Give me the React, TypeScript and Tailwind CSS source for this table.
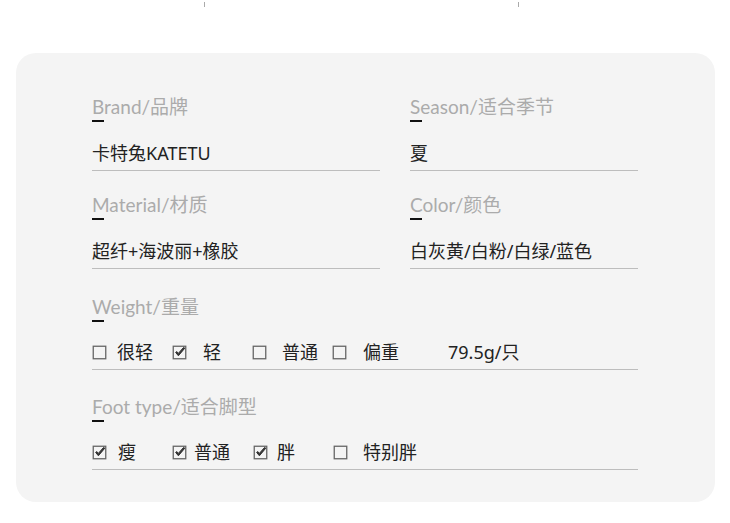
import React from "react";

const cjk = { fontFamily: '"Noto Sans", "Noto Sans CJK SC", sans-serif' };
const lab = { fontFamily: 'Lato, "Noto Sans CJK SC", sans-serif' };

function Box({ checked }: { checked?: boolean }) {
  return (
    <svg width="15" height="15" viewBox="0 0 15 15" className="shrink-0">
      <rect x="1.25" y="1.25" width="12.5" height="12.5" fill="none" stroke="#666" strokeWidth="1.3" />
      {checked && (
        <path d="M3.6 7.4 L6.4 10.8 L12.8 3.2 L11.6 2.4 L6.3 8.4 L4.9 6.6 Z" fill="#333" stroke="#333" strokeWidth="1" strokeLinejoin="round" />
      )}
    </svg>
  );
}

function Label({ text }: { text: string }) {
  return (
    <div>
      <div className="h-[20px] text-[19px] font-normal leading-[20px] text-[#ababab]" style={lab}>
        {text}
      </div>
      <div className="mt-[3px] h-[2px] w-[12px] bg-[#111]" />
    </div>
  );
}

function Field({ label, value, w }: { label: string; value: string; w: string }) {
  return (
    <div className={w}>
      <Label text={label} />
      <div className="mt-[21px] h-[20px] pb-[7px] box-content border-b border-[#bdbdbd] text-[18px] leading-[20px] text-[#222]" style={cjk}>
        {value}
      </div>
    </div>
  );
}

function Opt({ checked, text, w, gap }: { checked?: boolean; text: string; w: string; gap: string }) {
  return (
    <div className={`flex items-center ${w} ${gap}`}>
      <Box checked={checked} />
      <span>{text}</span>
    </div>
  );
}

export default function App() {
  return (
    <div className="w-[730px] h-[523px] bg-white relative overflow-hidden">
      <div className="absolute left-[204px] top-[2px] w-px h-[5px] bg-[#aaa]" />
      <div className="absolute left-[518px] top-[2px] w-px h-[5px] bg-[#aaa]" />
      <div className="pt-[53px] pl-[16px]">
        <div className="w-[699px] h-[449px] rounded-[20px] bg-[#f4f4f4] pl-[76px] pt-[44px]">
          <div className="flex">
            <Field label="Brand/品牌" value="卡特兔KATETU" w="w-[288px]" />
            <div className="w-[30px]" />
            <Field label="Season/适合季节" value="夏" w="w-[228px]" />
          </div>
          <div className="flex mt-[24px]">
            <Field label="Material/材质" value="超纤+海波丽+橡胶" w="w-[288px]" />
            <div className="w-[30px]" />
            <Field label="Color/颜色" value="白灰黄/白粉/白绿/蓝色" w="w-[228px]" />
          </div>
          <div className="mt-[28px] w-[546px]">
            <Label text="Weight/重量" />
            <div className="mt-[20px] h-[20px] pb-[7px] box-content border-b border-[#bdbdbd] flex items-center text-[18px] leading-[20px] text-[#222]" style={cjk}>
              <Opt text="很轻" w="w-[80px]" gap="gap-[10px]" />
              <Opt checked text="轻" w="w-[80px]" gap="gap-[16px]" />
              <Opt text="普通" w="w-[80px]" gap="gap-[15px]" />
              <Opt text="偏重" w="w-[116px]" gap="gap-[16px]" />
              <span>79.5g/只</span>
            </div>
          </div>
          <div className="mt-[27px] w-[546px]">
            <Label text="Foot type/适合脚型" />
            <div className="mt-[20px] h-[20px] pb-[7px] box-content border-b border-[#bdbdbd] flex items-center text-[18px] leading-[20px] text-[#222]" style={cjk}>
              <Opt checked text="瘦" w="w-[80px]" gap="gap-[11px]" />
              <Opt checked text="普通" w="w-[81px]" gap="gap-[7px]" />
              <Opt checked text="胖" w="w-[80px]" gap="gap-[9px]" />
              <Opt text="特别胖" w="w-[120px]" gap="gap-[15px]" />
            </div>
          </div>
        </div>
      </div>
    </div>
  );
}
